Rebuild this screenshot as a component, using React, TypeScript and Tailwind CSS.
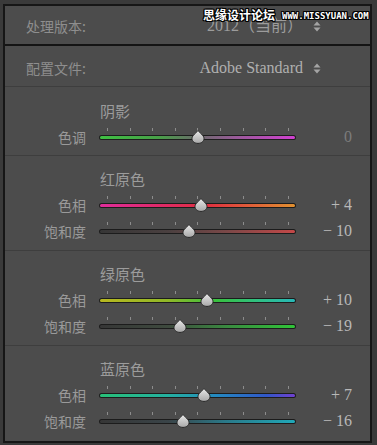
import React from 'react'

interface SliderRow {
  label: string
  value: number
  gradient: string
}

interface Section {
  title: string
  rows: SliderRow[]
  first?: boolean
}

const SECTIONS: Section[] = [
  {
    title: '阴影',
    first: true,
    rows: [
      {
        label: '色调',
        value: 0,
        gradient: 'linear-gradient(to right,#3fc043 0%,#48a048 30%,#6a6a6a 50%,#9a5a9a 70%,#d040d0 100%)',
      },
    ],
  },
  {
    title: '红原色',
    rows: [
      {
        label: '色相',
        value: 4,
        gradient: 'linear-gradient(to right,#e02d9a 0%,#e02a6a 30%,#e03040 55%,#e05a3a 75%,#e09030 100%)',
      },
      {
        label: '饱和度',
        value: -10,
        gradient: 'linear-gradient(to right,#363636 0%,#4a4040 35%,#7a4848 65%,#c44848 100%)',
      },
    ],
  },
  {
    title: '绿原色',
    rows: [
      {
        label: '色相',
        value: 10,
        gradient: 'linear-gradient(to right,#b8b820 0%,#90b828 35%,#38c040 60%,#30c080 80%,#28b8b8 100%)',
      },
      {
        label: '饱和度',
        value: -19,
        gradient: 'linear-gradient(to right,#363636 0%,#3e4a3e 35%,#3a8a40 65%,#30c438 100%)',
      },
    ],
  },
  {
    title: '蓝原色',
    rows: [
      {
        label: '色相',
        value: 7,
        gradient: 'linear-gradient(to right,#28c078 0%,#24b0a0 35%,#2488c0 60%,#3058c8 85%,#7040d0 100%)',
      },
      {
        label: '饱和度',
        value: -16,
        gradient: 'linear-gradient(to right,#363636 0%,#3a4448 35%,#2a7a8a 65%,#20a8b8 100%)',
      },
    ],
  },
]

const TICKS = [8, 30.6, 53.2, 75.8, 98.4, 121, 143.6, 166.2, 188.8]

function UpDown() {
  return (
    <svg width="8" height="11" viewBox="0 0 8 11" className="ml-[10px]">
      <path d="M4 0.5 L7.5 4.5 L0.5 4.5 Z" fill="#a4a4a4" />
      <path d="M4 10.5 L7.5 6.5 L0.5 6.5 Z" fill="#a4a4a4" />
    </svg>
  )
}

function Thumb() {
  return (
    <svg width="14" height="14" viewBox="0 0 14 14">
      <defs>
        <linearGradient id="thumbFill" x1="0" y1="0" x2="0" y2="1">
          <stop offset="0" stopColor="#e8e8e8" />
          <stop offset="1" stopColor="#a8a8a8" />
        </linearGradient>
      </defs>
      <path
        d="M7 0.6 C8.2 2.6 13 5.2 13 8.4 C13 11.6 10.2 13.4 7 13.4 C3.8 13.4 1 11.6 1 8.4 C1 5.2 5.8 2.6 7 0.6 Z"
        fill="url(#thumbFill)"
        stroke="#262626"
        strokeWidth="1"
      />
    </svg>
  )
}

function formatValue(v: number) {
  if (v === 0) return '0'
  return v > 0 ? `+ ${v}` : `− ${Math.abs(v)}`
}

function Slider({ row }: { row: SliderRow }) {
  const pos = 98.5 + row.value * 0.9
  return (
    <div className="flex items-center h-[26px]">
      <div className="w-[81px] text-right text-[14px] text-[#9a9a9a] leading-none [font-family:'Noto_Sans_CJK_SC',sans-serif]">
        {row.label}
      </div>
      <div className="relative ml-[13px] w-[197px] h-[26px]">
        {TICKS.map((t) => (
          <div key={t} className="absolute top-[4px] w-px h-[3px] bg-[#8c8c8c]" style={{ left: t }} />
        ))}
        <div className="absolute left-0 right-0 top-[11px] h-[5px] rounded-full bg-[#1c1c1c] p-px">
          <div className="h-full w-full rounded-full" style={{ background: row.gradient }} />
        </div>
        <div className="absolute top-[6px]" style={{ left: pos - 7 }}>
          <Thumb />
        </div>
      </div>
      <div
        className={`flex-1 text-right pr-[18px] text-[16px] leading-none [font-family:'Liberation_Serif',serif] ${
          row.value === 0 ? 'text-[#7c7c7c]' : 'text-[#b8b8b8]'
        }`}
      >
        {formatValue(row.value)}
      </div>
    </div>
  )
}

export default function App() {
  return (
    <div className="w-[377px] h-[445px] bg-[#3a3a3a] pt-[4px] pl-[3px] pr-[5px] pb-[2px]">
      <div className="relative h-full border-2 border-[#161616] bg-[#4c4c4c] flex flex-col">
        {/* 处理版本 */}
        <div className="h-[40px] flex items-center pt-[2px] pl-[21px] pr-[49px] border-b-2 border-[#141414]">
          <div className="text-[14px] text-[#8e8e8e] [font-family:'Noto_Sans_CJK_SC',sans-serif]">处理版本:</div>
          <div className="ml-auto flex items-center">
            <span className="text-[16px] text-[#9c9c9c] [font-family:'Liberation_Serif','Noto_Sans_CJK_SC',serif]">
              2012（当前）
            </span>
            <UpDown />
          </div>
        </div>

        {/* 配置文件 */}
        <div className="h-[41px] flex items-center pt-[4px] pl-[21px] pr-[49px] border-b border-[#3e3e3e]">
          <div className="text-[14px] text-[#8e8e8e] [font-family:'Noto_Sans_CJK_SC',sans-serif]">配置文件:</div>
          <div className="ml-auto flex items-center">
            <span className="text-[16px] text-[#b0b0b0] [font-family:'Liberation_Serif',serif]">Adobe Standard</span>
            <UpDown />
          </div>
        </div>

        {SECTIONS.map((s, i) => (
          <div
            key={s.title}
            className={`${s.first ? 'pt-[11px] pb-[5px]' : 'pt-[10px] pb-[6px]'} ${
              i < SECTIONS.length - 1 ? 'border-b border-[#3e3e3e]' : 'flex-1'
            }`}
          >
            <div className="h-[26px] flex items-center pl-[95px] text-[15px] text-[#9c9c9c] [font-family:'Noto_Sans_CJK_SC',sans-serif]">
              {s.title}
            </div>
            {s.rows.map((r) => (
              <Slider key={r.label} row={r} />
            ))}
          </div>
        ))}

        {/* watermark */}
        <div className="absolute top-[3px] left-[198px] flex items-center gap-[7px] text-white [text-shadow:1px_0_0_#000,-1px_0_0_#000,0_1px_0_#000,0_-1px_0_#000,1px_1px_0_#000,-1px_-1px_0_#000,1px_-1px_0_#000,-1px_1px_0_#000]">
          <span className="text-[12px] font-bold leading-none [font-family:'Noto_Sans_CJK_SC',sans-serif]">思缘设计论坛</span>
          <span className="text-[9px] font-bold leading-none mt-[3px] [font-family:'DejaVu_Sans_Mono',monospace]">
            WWW.MISSYUAN.COM
          </span>
        </div>
      </div>
    </div>
  )
}
